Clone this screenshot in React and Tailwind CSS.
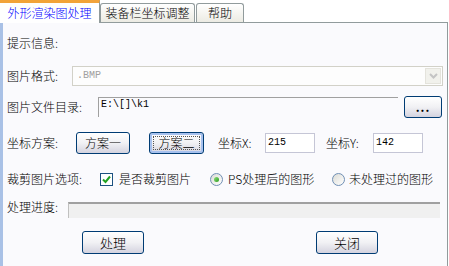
import React from "react";

const Btn = ({ children, className = "", focus = false }) => (
  <div
    className={`relative flex items-center justify-center rounded-[3px] border border-[#003c74] bg-gradient-to-b from-white via-[#f1f1f4] to-[#d4d3df] text-[12px] leading-none text-black ${
      focus ? "shadow-[inset_0_0_0_2px_#a7c1ee]" : ""
    } ${className}`}
  >
    {focus && (
      <span className="absolute inset-[3px] border border-dotted border-[#555]" />
    )}
    <span className="relative">{children}</span>
  </div>
);

const Radio = ({ on }) => (
  <span className="flex h-[13px] w-[13px] items-center justify-center rounded-full border border-[#6f8fb4] bg-gradient-to-br from-[#dcdcd6] to-white">
    {on && (
      <span className="h-[5px] w-[5px] rounded-full bg-gradient-to-br from-[#8ee07a] to-[#1f9a16]" />
    )}
  </span>
);

export default function App() {
  return (
    <div className="h-[266px] w-[449px] overflow-hidden bg-white font-['Noto_Sans_CJK_SC',sans-serif] text-[12px] font-light leading-none text-black">
      {/* tabs */}
      <div className="relative z-10 flex h-[22px] items-end">
        <div className="flex h-[23px] w-[100px] items-center justify-center self-start border-t-[3px] border-r border-t-[#f2a33a] border-r-[#919b9c] bg-white pb-[1px] text-[#0000ff]">
          外形渲染图处理
        </div>
        <div className="flex h-[19px] w-[95px] items-center justify-center rounded-t-[3px] border border-b-0 border-[#919b9c] bg-gradient-to-b from-white to-[#ecebe3]">
          装备栏坐标调整
        </div>
        <div className="ml-[1px] flex h-[19px] w-[48px] items-center justify-center rounded-t-[3px] border border-b-0 border-[#919b9c] bg-gradient-to-b from-white to-[#ecebe3]">
          帮助
        </div>
      </div>

      {/* panel */}
      <div className="flex h-[244px] w-[448px] flex-col border-t border-r border-l-[3px] border-t-[#919b9c] border-r-[#919b9c] border-l-[#a9c1e6] bg-[#fafafd] pl-[4px] pr-[4px]">
        <div className="mt-[10px] flex h-[20px] items-center">提示信息:</div>

        <div className="mt-[13px] flex h-[20px] items-center">
          <span className="w-[65px]">图片格式:</span>
          <div className="flex h-[20px] flex-1 items-center border border-[#d2d1c8] bg-[#fdfdfd] pl-[4px]">
            <span className="flex-1 font-['Liberation_Mono',monospace] text-[10px] text-[#a0a0a0]">
              .BMP
            </span>
            <span className="mr-[1px] flex h-[16px] w-[16px] items-center justify-center border border-[#e4e3dc] bg-[#f1f1ec]">
              <svg width="9" height="6" viewBox="0 0 9 6">
                <path d="M1 1l3.5 3.5L8 1" fill="none" stroke="#c4c4c4" strokeWidth="2" />
              </svg>
            </span>
          </div>
        </div>

        <div className="mt-[10px] flex h-[22px] items-center">
          <span className="w-[91px]">图片文件目录:</span>
          <div className="flex h-[20px] w-[300px] items-start border-t border-l border-[#a0a0a0] pl-[2px] pt-[2px] font-['Liberation_Mono',monospace] text-[10px]">
            E:\[]\k1
          </div>
          <Btn className="ml-[6px] h-[22px] w-[38px] font-bold tracking-[1px]">...</Btn>
        </div>

        <div className="mt-[14px] flex h-[22px] items-center">
          <span className="w-[69px]">坐标方案:</span>
          <Btn className="h-[22px] w-[54px]">方案一</Btn>
          <Btn className="ml-[19px] h-[22px] w-[55px]" focus>
            方案二
          </Btn>
          <span className="ml-[14px] w-[47px]">坐标X:</span>
          <div className="flex h-[20px] w-[50px] items-center border border-[#c5c6d6] bg-white pl-[2px] font-['Liberation_Mono',monospace] text-[10px]">
            215
          </div>
          <span className="ml-[11px] w-[47px]">坐标Y:</span>
          <div className="flex h-[20px] w-[50px] items-center border border-[#c5c6d6] bg-white pl-[2px] font-['Liberation_Mono',monospace] text-[10px]">
            142
          </div>
        </div>

        <div className="mt-[15px] flex h-[20px] items-center">
          <span className="w-[93px]">裁剪图片选项:</span>
          <span className="flex h-[13px] w-[13px] items-center justify-center border border-[#1c5180] bg-white">
            <svg width="9" height="9" viewBox="0 0 9 9">
              <path d="M1 4.5l2.5 2.5L8 1.5" fill="none" stroke="#21a121" strokeWidth="2" />
            </svg>
          </span>
          <span className="ml-[6px] w-[91px]">是否裁剪图片</span>
          <Radio on />
          <span className="ml-[5px] w-[104px]">PS处理后的图形</span>
          <Radio />
          <span className="ml-[4px]">未处理过的图形</span>
        </div>

        <div className="mt-[11px] flex h-[20px] items-center">
          <span className="-mt-[6px] w-[61px]">处理进度:</span>
          <div className="h-[16px] w-[372px] border-t-2 border-l border-t-[#a0a0a0] border-l-[#c0c0c0] bg-[#f0f0f0]" />
        </div>

        <div className="mt-[11px] flex h-[23px] items-center">
          <Btn className="ml-[75px] h-[23px] w-[62px] text-[13px]">处理</Btn>
          <Btn className="ml-[172px] h-[23px] w-[62px] text-[13px]">关闭</Btn>
        </div>
      </div>
    </div>
  );
}
